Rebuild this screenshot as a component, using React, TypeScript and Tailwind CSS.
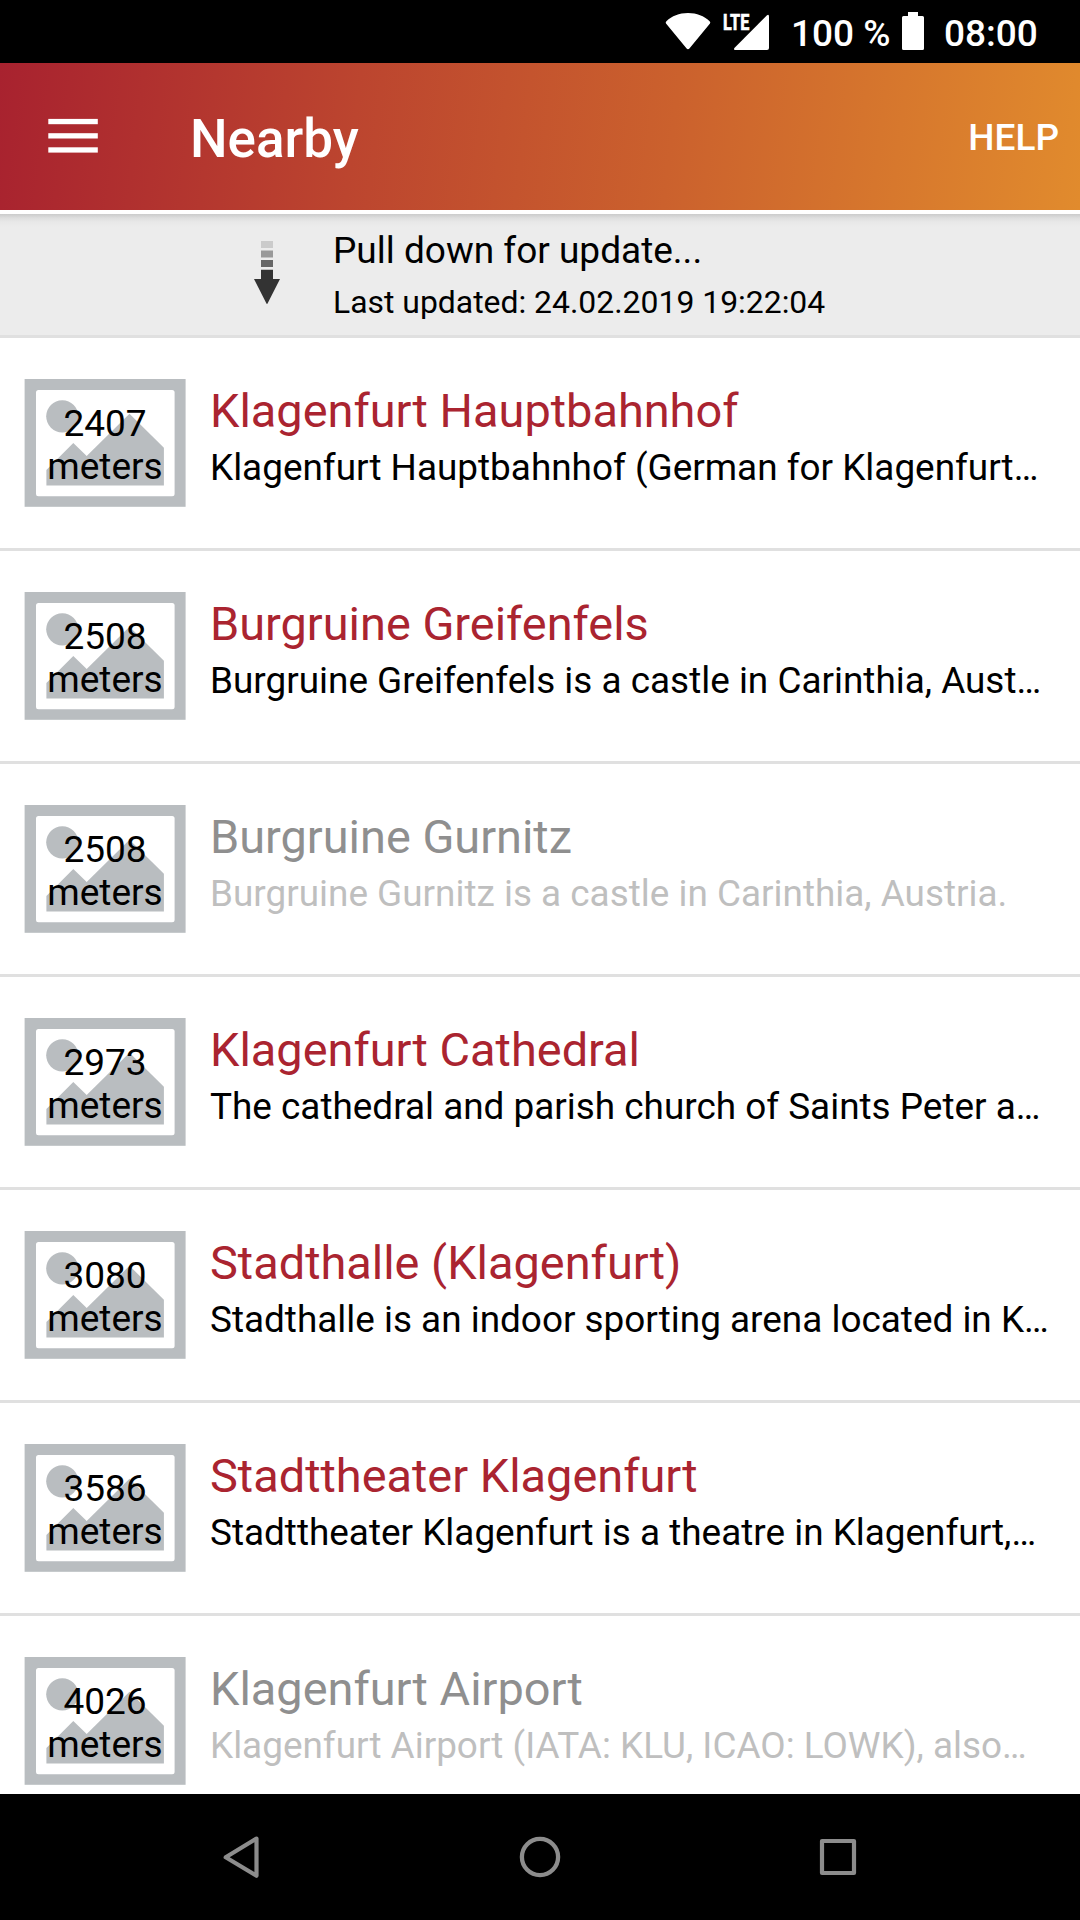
import React from "react";

type Place = { distance: string; title: string; text: string; muted?: boolean };

const places: Place[] = [
  { distance: "2407", title: "Klagenfurt Hauptbahnhof", text: "Klagenfurt Hauptbahnhof (German for Klagenfurt…" },
  { distance: "2508", title: "Burgruine Greifenfels", text: "Burgruine Greifenfels is a castle in Carinthia, Aust…" },
  { distance: "2508", title: "Burgruine Gurnitz", text: "Burgruine Gurnitz is a castle in Carinthia, Austria.", muted: true },
  { distance: "2973", title: "Klagenfurt Cathedral", text: "The cathedral and parish church of Saints Peter a…" },
  { distance: "3080", title: "Stadthalle (Klagenfurt)", text: "Stadthalle is an indoor sporting arena located in K…" },
  { distance: "3586", title: "Stadttheater Klagenfurt", text: "Stadttheater Klagenfurt is a theatre in Klagenfurt,…" },
  { distance: "4026", title: "Klagenfurt Airport", text: "Klagenfurt Airport (IATA: KLU, ICAO: LOWK), also…", muted: true },
];

function StatusBar() {
  return (
    <div className="flex h-[63px] shrink-0 items-start justify-end bg-black pr-[42px] text-[37px] leading-[43px] font-medium text-white">
      <svg className="mt-3 h-[38px] w-[46px]" viewBox="0 0 46 38" fill="#fff">
        <path d="M23 37.3 Q22.2 37.3 21.6 36.5 L1 11.4 Q0.2 10.2 1.4 9.2 C7 4 14 1 23 1 S39 4 44.6 9.2 Q45.8 10.2 45 11.4 L24.4 36.5 Q23.8 37.3 23 37.3Z" />
      </svg>
      <div className="relative mt-3 ml-[11px] h-[38px] w-[48px]">
        <svg className="h-[38px] w-[48px]" viewBox="0 0 48 38" fill="#fff">
          <path d="M45 3.3 Q47 2 47 4.5 V36 Q47 38 45 38 H13.2 Q11.2 38 12.4 36 Z" />
        </svg>
        <span className="absolute top-0 left-[0.5px] origin-left scale-x-[0.72] text-[22.5px] leading-[20px] font-extrabold [-webkit-text-stroke:0.5px_#fff]">LTE</span>
      </div>
      <span className="mt-3 ml-[21px] w-[99px] whitespace-nowrap">100 %</span>
      <svg className="mt-3 ml-[12px] h-[38px] w-[22px]" viewBox="0 0 22 38" fill="#fff">
        <path d="M6 0H16V4H20.5Q22 4 22 5.500V36.500Q22 38 20.500 38H1.500Q0 38 0 36.500V5.500Q0 4 1.500 4H6Z" />
      </svg>
      <span className="mt-3 ml-5 w-[94px] whitespace-nowrap">08:00</span>
    </div>
  );
}

function Header() {
  return (
    <header className="flex h-[147px] shrink-0 items-start bg-[linear-gradient(97deg,#a8222f_0%,#bc452f_33%,#cb612d_62%,#e18b2d_100%)] text-white">
      <svg className="mt-[55px] ml-12 h-[36px] w-[50px]" viewBox="0 0 50 36" fill="#fff">
        <rect x="0.300" y="0.900" width="49.500" height="5.300" />
        <rect x="0.300" y="15.200" width="49.500" height="5.300" />
        <rect x="0.300" y="29.300" width="49.500" height="5.300" />
      </svg>
      <h1 className="mt-[45px] ml-[92px] text-[53px] leading-[62px] font-medium">Nearby</h1>
      <span className="mt-[53px] mr-[21px] ml-auto text-[37px] leading-[43px] font-medium">HELP</span>
    </header>
  );
}

function PullToRefresh() {
  return (
    <div className="mt-1 flex h-[124px] shrink-0 items-start border-b-[3px] border-[#e0e0e0] bg-[#ececec] bg-[linear-gradient(#cbcbcb,#dedede_4px,#e8e8e8_8px,#ececec_13px)] text-black">
      <svg className="mt-[26px] ml-[253px] h-[66px] w-7" viewBox="0 0 28 66">
        <rect x="8" y="1" width="12" height="7" fill="#cbcbcb" />
        <rect x="8" y="10.500" width="12" height="7" fill="#999" />
        <rect x="8" y="20" width="12" height="7" fill="#666" />
        <path d="M8 29.700H20V39H27L14.800 63Q14 65 13.200 63L1 39H8Z" fill="#333" />
      </svg>
      <div className="ml-[52px] pt-[15px] whitespace-nowrap">
        <p className="text-[37px] leading-[43px]">Pull down for update...</p>
        <p className="mt-[11px] text-[31.9px] leading-[38px]">Last updated: 24.02.2019 19:22:04</p>
      </div>
    </div>
  );
}

function Thumbnail({ distance }: { distance: string }) {
  return (
    <div className="relative mt-10 ml-6 h-[130px] w-[162px] shrink-0">
      <svg className="h-[130px] w-[162px]" viewBox="0 0 162 130" fill="#b9bdc0">
        <rect x="0.600" y="1" width="161" height="127.800" />
        <rect x="12" y="12" width="138.600" height="106.300" rx="2.500" fill="#fff" />
        <circle cx="38.300" cy="38.300" r="16.100" />
        <path d="M22.400 107.400V91.900L49.300 65L62.700 78L105.500 35.800L139.900 69.700V107.400Z" />
      </svg>
      <p className="absolute top-6 left-0 w-[162px] text-center text-[37px] leading-[43px] text-black">
        {distance}
        <br />
        meters
      </p>
    </div>
  );
}

function PlaceRow({ place }: { place: Place }) {
  return (
    <li className="flex h-[213px] shrink-0 items-start border-b-[3px] border-[#e0e0e0] bg-white">
      <Thumbnail distance={place.distance} />
      <div className="ml-6 pt-[45px] whitespace-nowrap">
        <h2 className={`text-[46.9px] leading-[55px] ${place.muted ? "text-[#8f8f8f]" : "text-[#aa2430]"}`}>{place.title}</h2>
        <p className={`mt-2 text-[36.9px] leading-[43px] ${place.muted ? "text-[#bfbfbf]" : "text-black"}`}>{place.text}</p>
      </div>
    </li>
  );
}

function NavigationBar() {
  return (
    <nav className="flex h-[126px] shrink-0 items-center justify-between bg-black pr-[218px] pl-[219px]">
      <svg className="size-11" viewBox="0 0 44 44" fill="none" stroke="#8c8c8c" strokeWidth="4.200" strokeLinejoin="round">
        <path d="M6.700 22.300L37.500 3.600V40.800Z" />
      </svg>
      <svg className="ml-[3px] size-11" viewBox="0 0 44 44" fill="none" stroke="#8c8c8c" strokeWidth="4.300">
        <circle cx="22" cy="22" r="18.100" />
      </svg>
      <svg className="size-12" viewBox="0 0 48 48" fill="none" stroke="#8c8c8c" strokeWidth="4.200" strokeLinejoin="round">
        <rect x="8" y="8" width="32" height="32" />
      </svg>
    </nav>
  );
}

export default function App() {
  return (
    <div className="flex h-[1920px] w-[1080px] flex-col overflow-hidden bg-white font-[Roboto,sans-serif]">
      <StatusBar />
      <Header />
      <PullToRefresh />
      <ul className="flex min-h-0 flex-1 flex-col overflow-hidden">
        {places.map((place) => (
          <PlaceRow key={place.title} place={place} />
        ))}
      </ul>
      <NavigationBar />
    </div>
  );
}
